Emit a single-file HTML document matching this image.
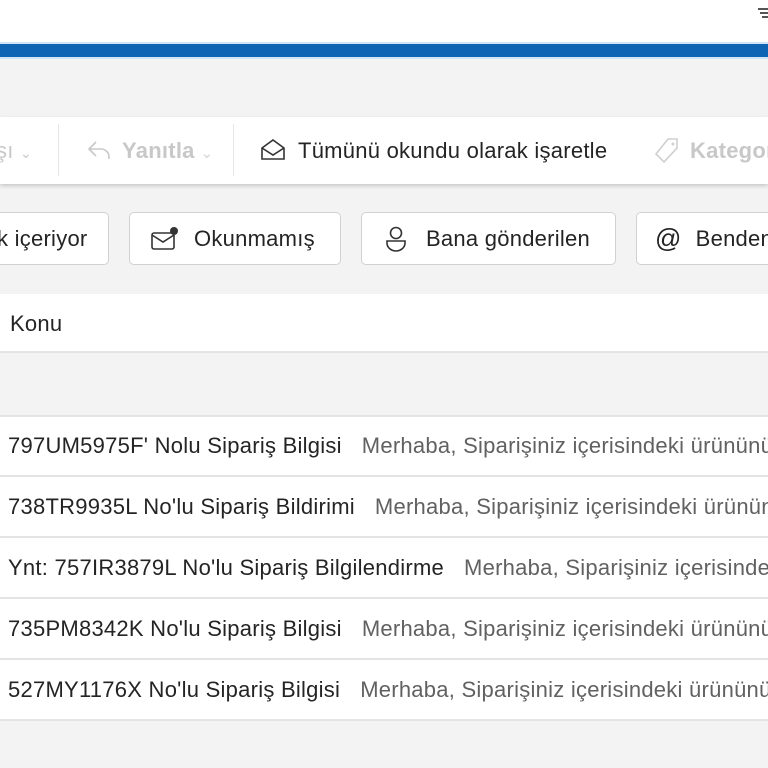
<!DOCTYPE html>
<html><head><meta charset="utf-8"><style>
*{margin:0;padding:0;box-sizing:border-box}
body{width:768px;height:768px;overflow:hidden;background:#f3f3f3;font-family:"Liberation Sans",sans-serif;position:relative;color:#242424}
.abs{position:absolute;white-space:nowrap}
.t{font-size:22px;letter-spacing:0.25px}
.btn{position:absolute;top:212px;height:53px;background:#fff;border:1px solid #d1d1d1;border-radius:5px;font-size:22px;letter-spacing:0.25px;display:flex;align-items:center;white-space:nowrap;overflow:hidden}
.row{position:absolute;left:0;width:768px;height:60px;background:#fff;border-bottom:2px solid #e4e4e4;font-size:22px;letter-spacing:0.25px;display:flex;align-items:center;padding-left:8px;white-space:nowrap;overflow:hidden}
.row .p{color:#616161;margin-left:20px}
</style></head><body>
<div class="abs" style="top:0;left:0;width:768px;height:42px;background:#fff"></div>
<div class="abs" style="top:8px;left:758px;width:10px;height:2px;background:#555;box-shadow:2px 4px 0 #555,4px 8px 0 #555"></div>
<div class="abs" style="top:42px;left:0;width:768px;height:2px;background:#cfe4f6"></div>
<div class="abs" style="top:44px;left:0;width:768px;height:13px;background:#0f65b3"></div>
<div class="abs" style="top:57px;left:0;width:768px;height:2px;background:#cfe4f6"></div>

<div class="abs" style="top:117px;left:0;width:768px;height:67px;background:#fff;box-shadow:0 2px 4px rgba(0,0,0,.18)"></div>
<div class="abs t" style="top:138px;left:-4px;color:#c8c8c8">şı <span style="font-size:14px">⌄</span></div>
<div class="abs" style="top:124px;left:58px;width:1px;height:52px;background:#e6e6e6"></div>
<svg class="abs" style="top:138px;left:86px" width="26" height="24" viewBox="0 0 26 24"><path d="M10 4L3 11l7 7M3 11h12a8 8 0 0 1 8 8v2" fill="none" stroke="#c8c8c8" stroke-width="1.6"/></svg>
<div class="abs t" style="top:138px;left:122px;color:#c8c8c8;font-weight:bold">Yanıtla <span style="font-size:14px;color:#ddd">⌄</span></div>
<div class="abs" style="top:124px;left:233px;width:1px;height:52px;background:#e6e6e6"></div>
<svg class="abs" style="top:137px;left:259px" width="28" height="26" viewBox="0 0 28 26"><path d="M3 11l11-8 11 8v11H3z M3 11l11 7 11-7" fill="none" stroke="#333" stroke-width="1.6"/></svg>
<div class="abs t" style="top:138px;left:298px">Tümünü okundu olarak işaretle</div>
<svg class="abs" style="top:136px;left:652px" width="30" height="30" viewBox="0 0 30 30"><path d="M16 3h9v9L12 26 4 18z" fill="none" stroke="#cfcfcf" stroke-width="1.6"/><circle cx="21" cy="8" r="1.5" fill="#cfcfcf"/></svg>
<div class="abs t" style="top:138px;left:690px;color:#c8c8c8;font-weight:bold">Kategori</div>

<div class="btn" style="left:-10px;width:119px;padding-left:6px">k içeriyor</div>
<div class="btn" style="left:129px;width:212px;padding-left:20px"><svg width="30" height="26" viewBox="0 0 30 26" style="margin-right:14px"><rect x="2" y="7" width="22" height="16" rx="2" fill="none" stroke="#333" stroke-width="1.6"/><path d="M2 9l11 7 11-7" fill="none" stroke="#333" stroke-width="1.6"/><circle cx="24" cy="5" r="4" fill="#333"/></svg>Okunmamış</div>
<div class="btn" style="left:361px;width:255px;padding-left:20px"><svg width="30" height="28" viewBox="0 0 30 28" style="margin-right:14px"><circle cx="14" cy="8" r="5.5" fill="none" stroke="#333" stroke-width="1.6"/><path d="M5 16h18v2a9 8 0 0 1-18 0z" fill="none" stroke="#333" stroke-width="1.6"/></svg>Bana gönderilen</div>
<div class="btn" style="left:636px;width:160px;padding-left:18px"><span style="font-size:26px;margin-right:14px">@</span>Benden</div>

<div class="abs" style="top:294px;left:0;width:768px;height:59px;background:#fff;border-bottom:2px solid #e4e4e4"></div>
<div class="abs t" style="top:311px;left:10px">Konu</div>

<div class="row" style="top:415px;border-top:2px solid #e4e4e4;height:62px">797UM5975F' Nolu Sipariş Bilgisi<span class="p">Merhaba, Siparişiniz içerisindeki ürününüz</span></div>
<div class="row" style="top:477px;height:61px">738TR9935L No'lu Sipariş Bildirimi<span class="p">Merhaba, Siparişiniz içerisindeki ürününüz</span></div>
<div class="row" style="top:538px;height:61px">Ynt: 757IR3879L No'lu Sipariş Bilgilendirme<span class="p">Merhaba, Siparişiniz içerisindeki ürününüz</span></div>
<div class="row" style="top:599px;height:61px">735PM8342K No'lu Sipariş Bilgisi<span class="p">Merhaba, Siparişiniz içerisindeki ürününüz</span></div>
<div class="row" style="top:660px;height:61px">527MY1176X No'lu Sipariş Bilgisi<span class="p">Merhaba, Siparişiniz içerisindeki ürününüz</span></div>
</body></html>
